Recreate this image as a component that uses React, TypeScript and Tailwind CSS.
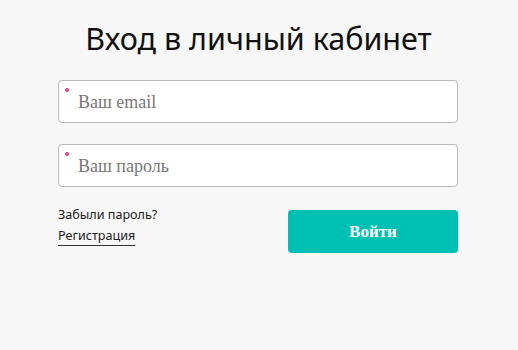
import React from "react";

export default function App() {
  return (
    <div className="w-[518px] h-[350px] bg-[#f7f7f7] flex flex-col items-center pt-[17px]">
      <h1 className="text-[30.5px] leading-[42px] text-[#111] font-['Noto_Sans',sans-serif] font-normal -ml-[1px]">
        Вход в личный кабинет
      </h1>
      <div className="w-[400px] -ml-[2px] mt-[21px] flex flex-col gap-[21px]">
        {["Ваш email", "Ваш пароль"].map((p) => (
          <div key={p} className="relative h-[43px] bg-white border border-[#b9b9b9] rounded-[4px] flex items-center pl-[19px]">
            <span className="absolute left-[6px] top-[7px] w-[4px] h-[4px] rounded-full bg-[#d9497f]" />
            <span className="font-['Liberation_Serif',serif] text-[18px] text-[#777] mt-[1px]">{p}</span>
          </div>
        ))}
        <div className="flex justify-between">
          <div className="flex flex-col font-['Noto_Sans',sans-serif] text-[12.6px] text-[#222] -mt-[2px]">
            <span className="leading-[17px]">Забыли пароль?</span>
            <span className="leading-[17px] mt-[4px] border-b border-[#333] self-start pb-[1px]">Регистрация</span>
          </div>
          <button className="w-[170px] h-[43px] rounded-[4px] bg-[#00bfb3] text-white font-['Liberation_Serif',serif] font-bold text-[17px] mt-[2px]">
            Войти
          </button>
        </div>
      </div>
    </div>
  );
}
